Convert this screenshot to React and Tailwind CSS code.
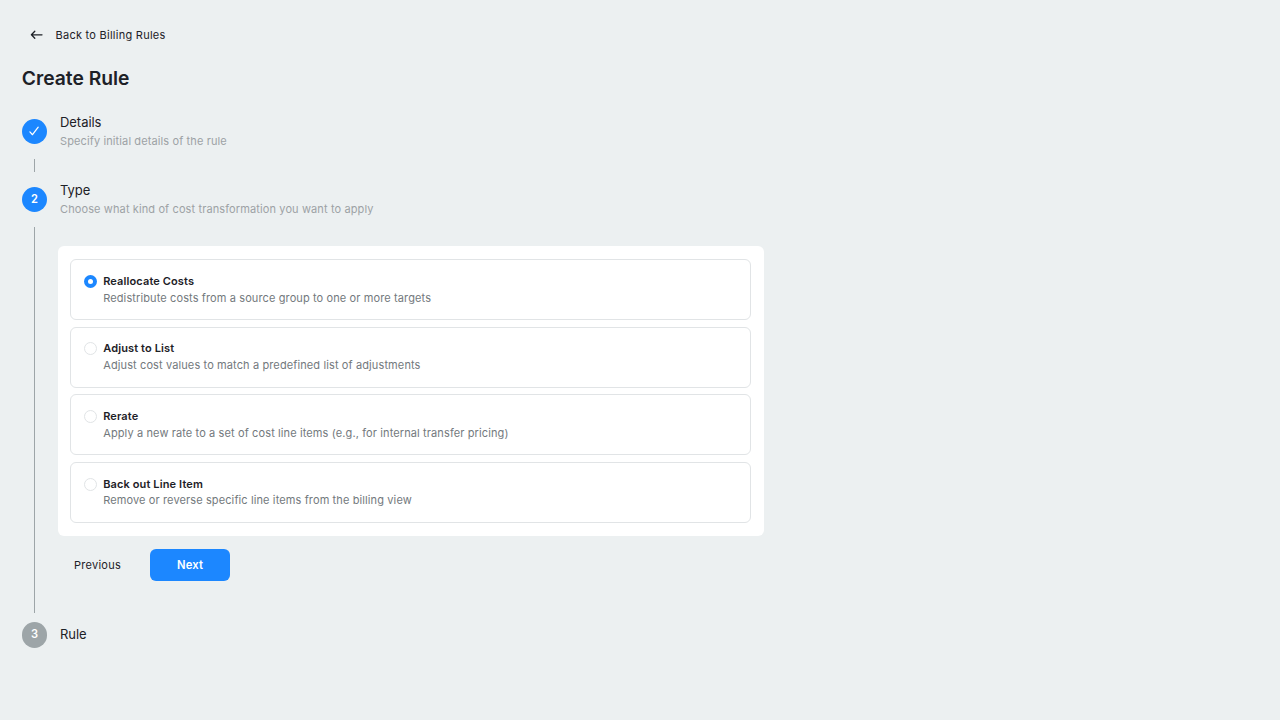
import React, { useState } from 'react';

const ruleTypes = [
    {
        id: 'reallocate',
        title: 'Reallocate Costs',
        description: 'Redistribute costs from a source group to one or more targets',
        padding: 'pt-[13px]',
        leading: 'leading-[17px]',
    },
    {
        id: 'adjust',
        title: 'Adjust to List',
        description: 'Adjust cost values to match a predefined list of adjustments',
        padding: 'pt-[12px]',
        leading: 'leading-[17px]',
    },
    {
        id: 'rerate',
        title: 'Rerate',
        description: 'Apply a new rate to a set of cost line items (e.g., for internal transfer pricing)',
        padding: 'pt-[13px]',
        leading: 'leading-[17px]',
    },
    {
        id: 'backout',
        title: 'Back out Line Item',
        description: 'Remove or reverse specific line items from the billing view',
        padding: 'pt-[13px]',
        leading: 'leading-[16px]',
    },
];

function StepBadge({ done = false, active = false, children }) {
    return (
        <div
            className={`flex w-[25px] shrink-0 items-center justify-center rounded-full text-[11.1px] font-semibold text-white ${done || active ? 'h-[25px] bg-[#1c87ff]' : 'h-[26px] bg-[#9da5a8] pb-px'}`}
        >
            {done ? (
                <svg width="11" height="11" viewBox="0 0 11 11" fill="none" stroke="currentColor" strokeWidth="1.25" strokeLinecap="round" strokeLinejoin="round">
                    <path d="M.9 5.9 3.5 8.7 9.2 1.2" />
                </svg>
            ) : (
                children
            )}
        </div>
    );
}

function StepText({ title, description }) {
    return (
        <div className={`ml-[13px] ${description ? '' : 'pb-[2px]'}`}>
            <p className="text-[13px] leading-[18px] tracking-[-0.05px]">{title}</p>
            {description && <p className="mt-px text-[11px] leading-[18px] tracking-[0.115px] text-[#9da2a5]">{description}</p>}
        </div>
    );
}

function RadioOption({ item, checked, onSelect }) {
    return (
        <button
            type="button"
            role="radio"
            aria-checked={checked}
            onClick={() => onSelect(item.id)}
            className={`flex h-[61px] w-full items-start rounded-md border border-[#e1e4e6] bg-white pl-[13px] text-left ${item.padding}`}
        >
            <span
                className={`mt-[2px] flex h-[13px] w-[13px] shrink-0 items-center justify-center rounded-full ${checked ? 'bg-[#1c87ff]' : 'border border-[#e1e4e6]'}`}
            >
                {checked && <span className="h-[4.5px] w-[4.5px] rounded-full bg-white" />}
            </span>
            <span className={`ml-[6.2px] block text-[11px] ${item.leading}`}>
                <span className="block font-semibold tracking-[0.12px]">{item.title}</span>
                <span className="block tracking-[0.115px] text-[#73797d]">{item.description}</span>
            </span>
        </button>
    );
}

export default function App() {
    const [selected, setSelected] = useState('reallocate');

    return (
        <div className="h-screen overflow-hidden bg-[#ecf0f1] pl-[22px] font-['Inter',sans-serif] text-[#1d2127]">
            <button type="button" className="mt-[26px] ml-[8px] flex h-[18px] items-center">
                <svg width="13" height="11" viewBox="0 0 13 11" fill="none" stroke="currentColor" strokeWidth="1.3" strokeLinecap="round" strokeLinejoin="round">
                    <path d="M12 4.8H1.4M4.8 1.3 1.4 4.8 4.8 8.3" />
                </svg>
                <span className="ml-[12.5px] text-[11px] tracking-[0.26px]">Back to Billing Rules</span>
            </button>

            <h1 className="mt-[20px] -ml-[0.3px] text-[19.3px] leading-[28px] font-semibold">Create Rule</h1>

            <div className="mt-[21px] flex h-[37px] items-center">
                <StepBadge done />
                <StepText title="Details" description="Specify initial details of the rule" />
            </div>

            <div className="mt-[9px] ml-[12px] h-[13px] w-px bg-[#9da5a8]" />

            <div className="mt-[9px] flex h-[37px] items-center">
                <StepBadge active>2</StepBadge>
                <StepText title="Type" description="Choose what kind of cost transformation you want to apply" />
            </div>

            <div className="mt-[9px] ml-[12px] h-[386px] w-[730px] border-l border-[#9da5a8] pt-[19px] pl-[23px]">
                <div role="radiogroup" className="flex h-[290px] flex-col gap-[6.67px] rounded-md bg-white px-3 pt-[13px] pr-[13px]">
                    {ruleTypes.map((item) => (
                        <RadioOption key={item.id} item={item} checked={selected === item.id} onSelect={setSelected} />
                    ))}
                </div>
                <div className="mt-[13px] flex h-8 items-center">
                    <button type="button" className="w-[79px] text-[11px] tracking-[0.26px]">
                        Previous
                    </button>
                    <button type="button" className="ml-[13px] h-8 w-[80px] rounded-md bg-[#1c87ff] text-[11.25px] font-semibold tracking-[0.15px] text-white">
                        Next
                    </button>
                </div>
            </div>

            <div className="mt-[9px] flex h-[26px] items-center">
                <StepBadge>3</StepBadge>
                <StepText title="Rule" />
            </div>
        </div>
    );
}
